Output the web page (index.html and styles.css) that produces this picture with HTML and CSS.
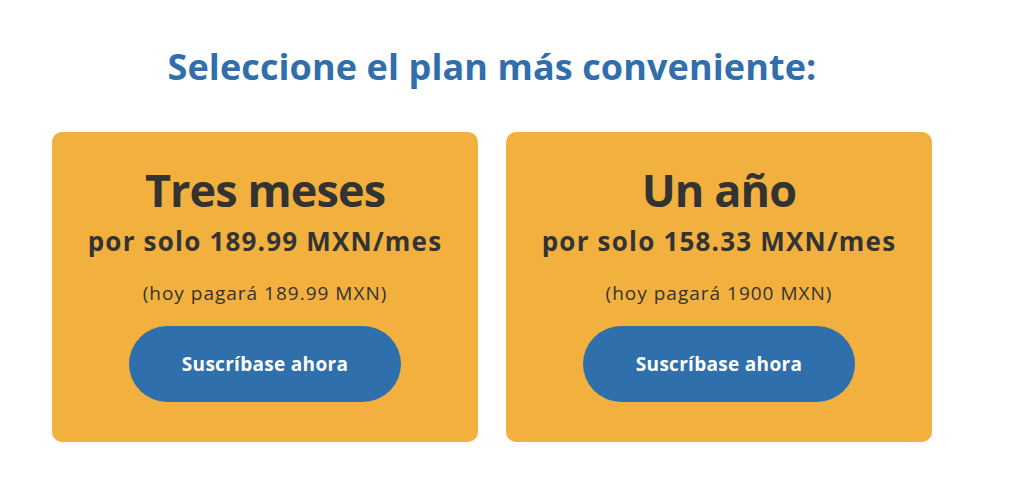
FILE: index.html
```html
<!DOCTYPE html>
<html lang="es">
<head>
  <meta charset="UTF-8">
  <meta name="viewport" content="width=device-width, initial-scale=1.0">
  <title>Planes</title>
  <link rel="stylesheet" href="styles.css">
</head>
<body>
  <div class="plans">
    <h2 class="plans-title">Seleccione el plan más conveniente:</h2>
    <div class="plan-list">
      <div class="plan-card">
        <h3 class="plan-name">Tres meses</h3>
        <div class="plan-price">por solo 189.99 MXN/mes</div>
        <div class="plan-total">(hoy pagará 189.99 MXN)</div>
        <a class="plan-btn" href="#">Suscríbase ahora</a>
      </div>
      <div class="plan-card">
        <h3 class="plan-name">Un año</h3>
        <div class="plan-price">por solo 158.33 MXN/mes</div>
        <div class="plan-total">(hoy pagará 1900 MXN)</div>
        <a class="plan-btn" href="#">Suscríbase ahora</a>
      </div>
    </div>
  </div>
</body>
</html>
```
FILE: styles.css
```css
body{
  margin: 0;
  background: #fff;
  font-family: "Open Sans", Lato, sans-serif;
  color: #333;
}
.plans{
  width: 880px;
  margin-left: 52px;
  padding-top: 42px;
}
.plans-title{
  margin: 0;
  font-size: 36px;
  font-weight: 700;
  color: #306fab;
  text-align: center;
  line-height: 50px;
  letter-spacing: 0.1px;
}
.plan-list{
  display: flex;
  gap: 28px;
  margin-top: 40px;
}
.plan-card{
  flex: 1;
  box-sizing: border-box;
  height: 310px;
  padding-top: 30px;
  background: #f2b13f;
  border-radius: 10px;
  text-align: center;
}
.plan-name{
  margin: 0;
  font-size: 45px;
  font-weight: 700;
  line-height: 56px;
  letter-spacing: -0.9px;
}
.plan-price{
  margin-top: 6px;
  font-size: 26px;
  font-weight: 700;
  line-height: 34px;
  letter-spacing: 1.2px;
}
.plan-total{
  margin-top: 22px;
  font-size: 19px;
  line-height: 26px;
  letter-spacing: 1px;
}
.plan-btn{
  display: flex;
  align-items: center;
  justify-content: center;
  width: 272px;
  height: 76px;
  margin: 20px auto 0;
  border-radius: 38px;
  background: #2f6fab;
  color: #fff;
  font-size: 19px;
  font-weight: 700;
  letter-spacing: 0.3px;
  text-decoration: none;
}
```
